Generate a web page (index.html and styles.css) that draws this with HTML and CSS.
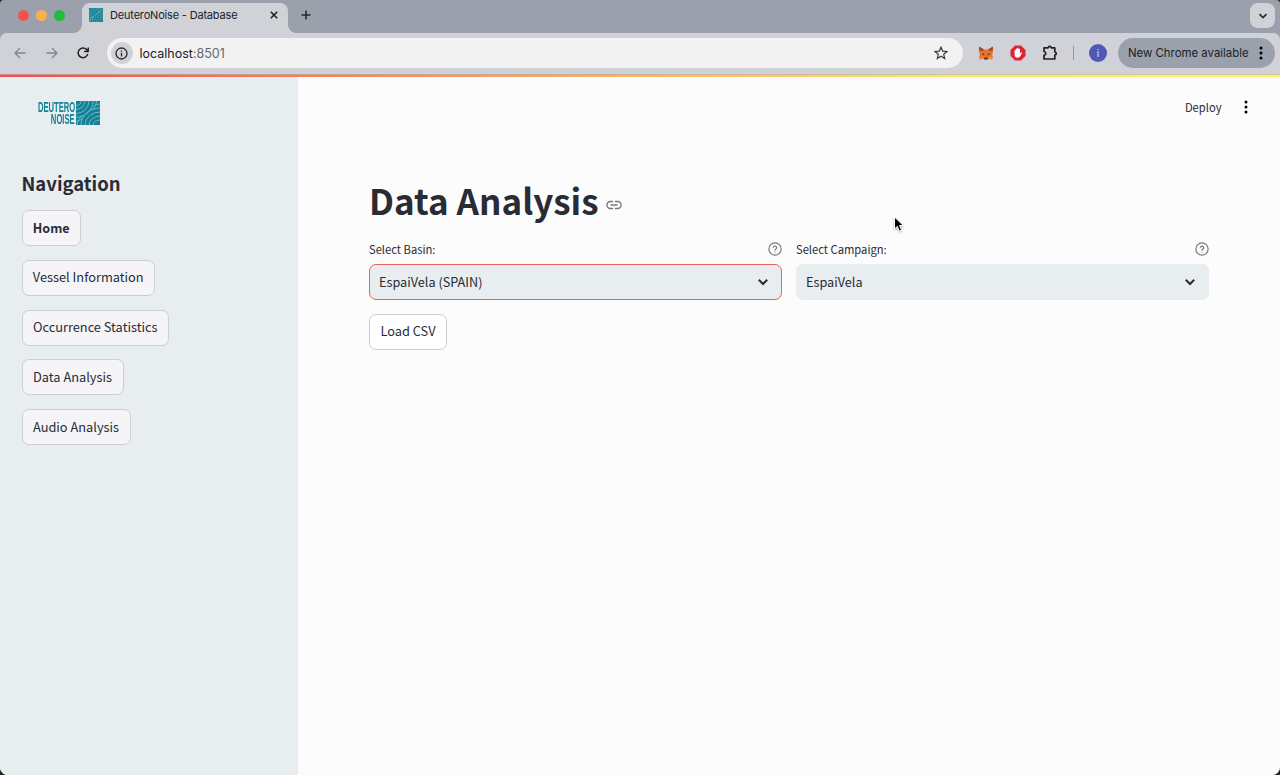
FILE: index.html
```
<!DOCTYPE html>
<html lang="en">
<head>
<meta charset="utf-8">
<title>DeuteroNoise - Database</title>
<link rel="stylesheet" href="styles.css">
</head>
<body>
<svg class="defs" width="0" height="0" aria-hidden="true">
  <symbol id="waves" viewBox="0 0 24 24">
    <rect width="24" height="24" fill="#168096"/>
    <g fill="none" stroke="#69bac4" stroke-width="1">
      <path d="M0 4.500A5 5 0 0 0 5 0M0 8.500A9 9 0 0 0 9 0M0 12.500A13 13 0 0 0 13 0M0 16.500A17 17 0 0 0 17 0M0 20.500Q4 20 7 17M16 9Q20 5 21 0"/>
      <path d="M5 24A19 17 0 0 1 24 7M9 24A15 13 0 0 1 24 11M13 24A11 9 0 0 1 24 15M17 24A7 5 0 0 1 24 19M1 24Q2 18 6 14M18 5Q21 3 24 3"/>
    </g>
  </symbol>
  <symbol id="chevron" viewBox="0 0 12 12"><path d="M1.8 3.800 6 8l4.200-4.200" fill="none" stroke="currentColor" stroke-width="2"/></symbol>
  <symbol id="dots" viewBox="0 0 6 16"><circle cx="3" cy="3" r="1.500"/><circle cx="3" cy="8" r="1.500"/><circle cx="3" cy="13" r="1.500"/></symbol>
  <symbol id="help" viewBox="0 0 24 24"><g fill="none" stroke="currentColor" stroke-width="2" stroke-linecap="round" stroke-linejoin="round"><circle cx="12" cy="12" r="10.500"/><path d="M9.100 9a3 3 0 0 1 5.800 1c0 2-2.900 2.600-2.900 4M12 17.500v.1"/></g></symbol>
</svg>
<div class="window">
  <header class="tabstrip">
    <div class="lights"><i class="red"></i><i class="amber"></i><i class="green"></i></div>
    <div class="tab">
      <svg class="favicon" width="14" height="14"><use href="#waves"/></svg>
      <span class="tab-title">DeuteroNoise - Database</span>
      <svg class="tab-close" width="8" height="8" viewBox="0 0 8 8"><path d="m.8.8 6.400 6.400m0-6.400L.8 7.200" stroke="#1b1c20" stroke-width="1.500"/></svg>
    </div>
    <svg class="new-tab" width="10" height="10" viewBox="0 0 10 10"><path d="M5 .5v9M.5 5h9" stroke="#25262a" stroke-width="1.500"/></svg>
    <div class="tab-search"><svg width="10" height="10"><use href="#chevron"/></svg></div>
  </header>
  <div class="toolbar">
    <svg class="nav-icon" width="12" height="12" viewBox="0 0 12 12"><path d="M11.500 6H1M6 1 1 6l5 5" fill="none" stroke="#82858b" stroke-width="1.300"/></svg>
    <svg class="nav-icon" width="12" height="12" viewBox="0 0 12 12"><path d="M.5 6H11M6 1l5 5-5 5" fill="none" stroke="#82858b" stroke-width="1.300"/></svg>
    <svg class="nav-icon reload" width="12" height="12" viewBox="0 0 12 12"><path d="M10.700 6.800A4.800 4.800 0 1 1 9.500 2.600L11 4.200M11.200.4v4.100H7.100" fill="none" stroke="#202124" stroke-width="1.500"/></svg>
    <div class="address">
      <span class="site-info"><svg width="13" height="13" viewBox="0 0 13 13"><circle cx="6.500" cy="6.500" r="5.500" fill="none" stroke="#26272b" stroke-width="1.300"/><path d="M6.500 5.800v3.600M6.500 3.500v1.300" stroke="#26272b" stroke-width="1.300"/></svg></span>
      <span class="url">localhost<span class="port">:8501</span></span>
      <svg class="star" width="14" height="14" viewBox="0 0 14 14"><path d="m7 1.200 1.700 3.900 4.300.4-3.300 2.800 1 4.200L7 10.300l-3.700 2.200 1-4.200L1 5.500l4.300-.4Z" fill="none" stroke="#36383d" stroke-width="1.200"/></svg>
    </div>
    <svg class="fox" width="16" height="14" viewBox="0 0 16 14"><path d="m1 .5 5 3h4l5-3v5l-.8 3L15 11l-1 2.500-3.500-.8-1 1h-3l-1-1-3.500.8L1 11l.8-2.500-.8-3Z" fill="#e9712e"/><path d="m1 .5 5 3-2 1.500-2.800-.5ZM15 .5l-5 3L12 5l2.800-.5Z" fill="#a8452d"/><path d="m3.500 7.500 3 .5-.8 1.500ZM12.500 7.500l-3 .5.8 1.500Z" fill="#44332e"/><path d="M6 11.500h4l-.5 2h-3Z" fill="#563a35"/><path d="m1 11 4.500-.5v2l-3.500 1Zm14 0-4.500-.5v2l3.500 1Z" fill="#f28a42"/></svg>
    <svg class="blocker" width="16" height="16" viewBox="0 0 16 16"><path d="M5 .5h6L15.500 5v6L11 15.500H5L.5 11V5Z" fill="#dd2633"/><path d="M4.600 8.500V5.200q.7-.8 1.300 0V4q.7-.8 1.300 0v-.7q.8-.8 1.400 0V4q.8-.7 1.400.1v4.600l1-1.200q1-.6 1.100.3L10.400 11Q9.500 12.800 7.500 12.700q-2.900-.2-2.900-2.900Z" fill="#fff"/></svg>
    <svg class="puzzle" width="16" height="16" viewBox="0 0 16 16"><path d="M2 2.800h4.200q.1-1.500 1.500-1.500t1.500 1.500h3.600V7q1.500.1 1.500 1.500t-1.500 1.500v4H2v-3.700q1.800-.3 1.800-1.900T2 6.500Z" fill="none" stroke="#202124" stroke-width="1.700" stroke-linejoin="round"/></svg>
    <span class="divider"></span>
    <span class="avatar">i</span>
    <div class="update"><span>New Chrome available</span><svg width="6" height="16"><use href="#dots"/></svg></div>
  </div>
  <div class="decoration"></div>
  <div class="app">
    <aside class="sidebar">
      <div class="logo"><div class="logo-text"><span class="logo-top">DEUTERO</span><span class="logo-bottom">NOISE</span></div><svg width="24" height="24"><use href="#waves"/></svg></div>
      <h2>Navigation</h2>
      <nav>
        <button class="home">Home</button>
        <button class="vessel">Vessel Information</button>
        <button class="occurrence">Occurrence Statistics</button>
        <button class="data">Data Analysis</button>
        <button class="audio">Audio Analysis</button>
      </nav>
    </aside>
    <main>
      <div class="app-tools"><span>Deploy</span><svg width="6" height="16"><use href="#dots"/></svg></div>
      <div class="title"><h1>Data Analysis</h1><svg width="16" height="10" viewBox="0 0 16 10"><path d="M6.500 1.500H4.400a3.500 3.500 0 0 0 0 7h2.100M9.500 1.500h2.100a3.500 3.500 0 0 1 0 7H9.500M5 5h6" fill="none" stroke="#777981" stroke-width="1.400" stroke-linecap="round"/></svg></div>
      <div class="fields">
        <div class="field"><div class="label"><span>Select Basin:</span><svg width="14" height="14"><use href="#help"/></svg></div><div class="select active"><span>EspaiVela (SPAIN)</span><svg width="12" height="12"><use href="#chevron"/></svg></div></div>
        <div class="field"><div class="label"><span>Select Campaign:</span><svg width="14" height="14"><use href="#help"/></svg></div><div class="select"><span>EspaiVela</span><svg width="12" height="12"><use href="#chevron"/></svg></div></div>
      </div>
      <button class="load">Load CSV</button>
    </main>
  </div>
  <svg class="cursor" width="12" height="18" viewBox="0 0 12 18"><path d="M1.500 1v12l2.800-2.600 2 4.700 2.300-1-2-4.500h3.800Z" stroke="#fff" stroke-width="1"/></svg>
</div>
</body>
</html>
```
FILE: styles.css
```
* { box-sizing: border-box; }
html { background: #242526; }
body { margin: 0; overflow: hidden; font-family: "Noto Sans CJK SC", "Noto Sans", sans-serif; color: #292b35; }
svg { display: block; flex: none; }
.defs { position: absolute; }
.window { position: relative; display: flex; flex-direction: column; height: 775px; border-radius: 4px 4px 8px 8px; overflow: hidden; background: #9aa0ac; }
.tabstrip { height: 33px; flex: none; display: flex; font-family: Inter, sans-serif; }
.lights { display: flex; gap: 7px; padding: 10px 0 0 18px; width: 82px; flex: none; }
.lights i { width: 11px; height: 11px; border-radius: 50%; }
.red { background: #fb514a; }
.amber { background: #fdb04a; }
.green { background: #20bd38; }
.tab { position: relative; width: 206px; height: 30px; margin-top: 3px; padding: 0 10px 6px 7px; display: flex; align-items: center; background: #d0d2d8; border-radius: 8px 8px 0 0; }
.tab::before, .tab::after { content: ""; position: absolute; bottom: 0; width: 8px; height: 8px; }
.tab::before { left: -8px; background: radial-gradient(circle at 0 0, transparent 7.5px, #d0d2d8 8px); }
.tab::after { right: -8px; background: radial-gradient(circle at 100% 0, transparent 7.5px, #d0d2d8 8px); }
.tab-title { margin-left: 7px; font-size: 11px; line-height: 16px; color: #202126; letter-spacing: -.18px; white-space: nowrap; }
.tab-close { margin-left: auto; }
.new-tab { margin: 10px 0 0 13px; }
.tab-search { width: 25px; height: 25px; margin: 3px 5px 0 auto; border-radius: 8px; background: #d0d2d8; display: grid; place-items: center; }
.toolbar { height: 41px; flex: none; display: flex; align-items: center; background: #d0d2d8; border-radius: 7px 7px 0 0; font-family: Inter, sans-serif; padding: 0 5px 1px 14px; }
.nav-icon + .nav-icon { margin-left: 19.7px; }
.address { display: flex; align-items: center; width: 856px; height: 30px; margin-left: 17.6px; padding: 0 15px 0 4px; border-radius: 15px; background: #f2f2f3; }
.site-info { display: grid; place-items: center; width: 22px; height: 22px; border-radius: 50%; background: #d0d2d8; }
.url { margin-left: 6.5px; font-size: 12.5px; color: #202124; }
.port { color: #65676b; }
.star { margin-left: auto; }
.fox { margin-left: 15px; }
.blocker { margin-left: 16px; }
.puzzle { margin-left: 16px; }
.divider { width: 1px; height: 14px; margin-left: 15px; background: #9398a8; }
.avatar { width: 18px; height: 18px; margin-left: 15px; border-radius: 50%; background: #4d59b5; color: #dee2ff; text-align: center; font-size: 10px; line-height: 18px; }
.update { width: 157px; height: 30px; margin-left: auto; padding: 0 11px 0 10px; border-radius: 15px; background: #9aa0ac; display: flex; align-items: center; justify-content: space-between; font-size: 11.4px; color: #202126; white-space: nowrap; }
.decoration { height: 3px; flex: none; background: linear-gradient(90deg, #f94d4b, #ffe96b 76%, #fff269); border-top: 1px solid rgba(175, 177, 181, .65); }
.app { flex: 1; min-height: 0; display: flex; background: #fcfcfc; }
.sidebar { width: 298px; flex: none; padding: 24px 22px 0; background: #e8edef; }
.logo { display: flex; height: 25px; margin-left: 15px; color: #168096; }
.logo-text { width: 39px; display: flex; flex-direction: column; align-items: flex-end; font: 700 15px/12px "Liberation Sans", sans-serif; }
.logo-text span { transform-origin: right; transform: scaleX(.51); white-space: nowrap; padding-right: 2px; }
h2 { margin: 45px 0 0 -.5px; font-size: 18.5px; line-height: 24px; font-weight: 700; }
nav { display: flex; flex-direction: column; align-items: flex-start; gap: 13.8px; margin: 15px 0 0 -.5px; }
button { height: 36px; padding: 0 0 1px; font: 12.8px/20px "Noto Sans CJK SC", sans-serif; color: inherit; border: 1px solid #cdced1; border-radius: 7px; background: #f5f5f8; white-space: nowrap; }
.home { width: 59.5px; font-weight: 700; font-size: 12.6px; }
.vessel { width: 133.500px; }
.occurrence { width: 147.500px; }
.data { width: 102px; }
.audio { width: 109px; }
main { width: 982px; padding: 20px 71px 0; }
.app-tools { display: flex; justify-content: flex-end; align-items: center; gap: 21.5px; height: 20px; margin-right: -40px; font-size: 11.2px; line-height: 20px; }
.title { display: flex; align-items: center; gap: 7px; height: 48px; margin-top: 59px; }
.title svg { margin-top: 10px; }
h1 { margin: 0; font-size: 35px; line-height: 48px; font-weight: 700; white-space: nowrap; }
.fields { display: flex; gap: 14px; margin-top: 14px; }
.field { width: 413px; }
.label { display: flex; justify-content: space-between; align-items: center; height: 22px; font-size: 11.2px; line-height: 20px; }
.label svg { color: #777981; }
.select { height: 36px; margin-top: 4px; padding: 0 12px 1px 9px; border: 1px solid #e8edef; border-radius: 7px; background: #e8edef; display: flex; justify-content: space-between; align-items: center; font-size: 12.7px; line-height: 20px; }
.select.active { border-color: #f0625b; }
.load { display: block; width: 78px; margin-top: 13.5px; background: #fff; }
.cursor { position: absolute; left: 892.5px; top: 216px; filter: drop-shadow(0 1px 1px rgba(0, 0, 0, .3)); }
```
